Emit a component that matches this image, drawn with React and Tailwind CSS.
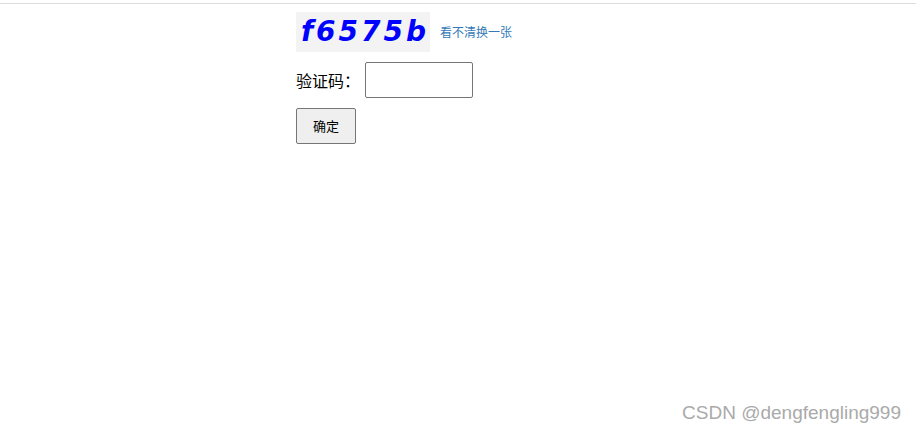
export default function App() {
  return (
    <div className="relative h-[430px] w-[916px] bg-white font-['Microsoft_YaHei','Noto_Sans_CJK_SC',sans-serif]">
      <div className="h-[4px] border-b border-[#dddddd]" />
      <div className="pl-[296px] pt-[8px]">
        <div className="flex items-center">
          <div className="flex h-[40px] w-[134px] items-center justify-center bg-[#f3f3f3] pl-[4px] font-['DejaVu_Sans',sans-serif] text-[28px] font-bold italic tracking-[3px] text-[#0000ff]">
            f6575b
          </div>
          <a href="#_" className="ml-[10px] text-[12px] text-[#337ab7]">
            看不清换一张
          </a>
        </div>
        <div className="mt-[10px] flex items-center">
          <label className="text-[16px] text-black">验证码：</label>
          <input type="text" className="ml-[5px] h-[36px] w-[108px] rounded-[2px] border border-[#767676] bg-white" />
        </div>
        <button className="mt-[10px] h-[36px] w-[60px] rounded-[2px] border border-[#767676] bg-[#efefef] text-[13px] text-black">
          确定
        </button>
      </div>
      <div className="absolute right-[15px] top-[399px] font-['Liberation_Sans',sans-serif] text-[19px] text-[#aaaaaa]">
        CSDN @dengfengling999
      </div>
    </div>
  );
}
